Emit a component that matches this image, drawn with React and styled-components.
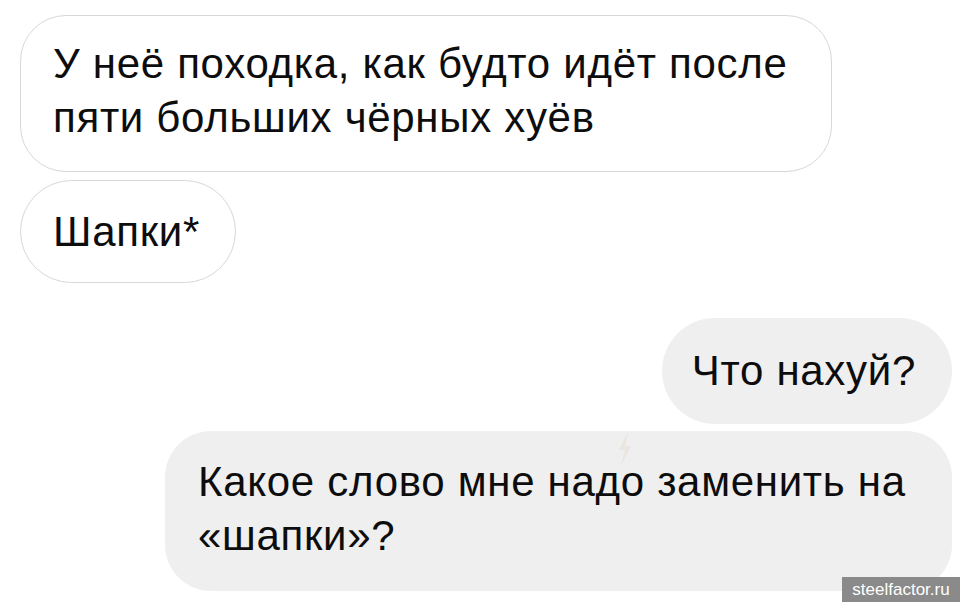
import React from "react";
import styled, { createGlobalStyle } from "styled-components";

const GlobalStyle = createGlobalStyle`
  html, body {
    margin: 0;
    padding: 0;
    background: #ffffff;
  }
  body {
    font-family: "Liberation Sans", Arial, sans-serif;
    color: #111111;
  }
`;

const Screen = styled.div`
  position: relative;
  width: 960px;
  height: 602px;
  overflow: hidden;
  background: #ffffff;
  box-sizing: border-box;
  padding: 15px 8px 0 20px;
  display: flex;
  flex-direction: column;
`;

const Row = styled.div`
  display: flex;
  justify-content: ${p => (p.$mine ? "flex-end" : "flex-start")};
  margin-top: ${p => p.$gap || 0}px;
`;

const Bubble = styled.div`
  box-sizing: border-box;
  width: ${p => (p.$width ? p.$width + "px" : "auto")};
  padding: ${p => p.$pad || "24px 36px 24px 32px"};
  border-radius: ${p => p.$radius || 46}px;
  font-size: 42px;
  line-height: 54px;
  letter-spacing: 0.7px;
  color: #0d0d0d;
  white-space: nowrap;
  background: ${p => (p.$mine ? "#efefef" : "#ffffff")};
  border: ${p => (p.$mine ? "none" : "1.5px solid #d8d8d8")};
`;

const Line = styled.div``;

const Watermark = styled.div`
  position: absolute;
  right: 0;
  bottom: 0;
  width: 118px;
  height: 25px;
  background: #8a8a8a;
  color: #ffffff;
  font-family: "Liberation Sans", Arial, sans-serif;
  font-size: 17px;
  line-height: 25px;
  text-align: center;
`;

const Ghost = styled.svg`
  position: absolute;
  left: 616px;
  top: 432px;
  opacity: 0.5;
`;

export default function App() {
  return (
    <>
      <GlobalStyle />
      <Screen>
        <Row>
          <Bubble $width={812} $pad="21px 30px 26px 32px">
            <Line>У неё походка, как будто идёт после</Line>
            <Line>пяти больших чёрных хуёв</Line>
          </Bubble>
        </Row>
        <Row $gap={8}>
          <Bubble $radius={52} $pad="24px 35px 23px 32px">
            <Line>Шапки*</Line>
          </Bubble>
        </Row>
        <Row $mine $gap={35}>
          <Bubble $mine $radius={53} $pad="26px 36px 26px 30px">
            <Line>Что нахуй?</Line>
          </Bubble>
        </Row>
        <Row $mine $gap={7}>
          <Bubble $mine $width={787} $pad="24px 30px 28px 33px">
            <Line>Какое слово мне надо заменить на</Line>
            <Line>«шапки»?</Line>
          </Bubble>
        </Row>
        <Ghost width="18" height="34" viewBox="0 0 18 34">
          <path d="M12 0 L3 18 L9 18 L5 34 L15 14 L9 14 Z" fill="#e7dfcf" />
        </Ghost>
        <Watermark>steelfactor.ru</Watermark>
      </Screen>
    </>
  );
}
